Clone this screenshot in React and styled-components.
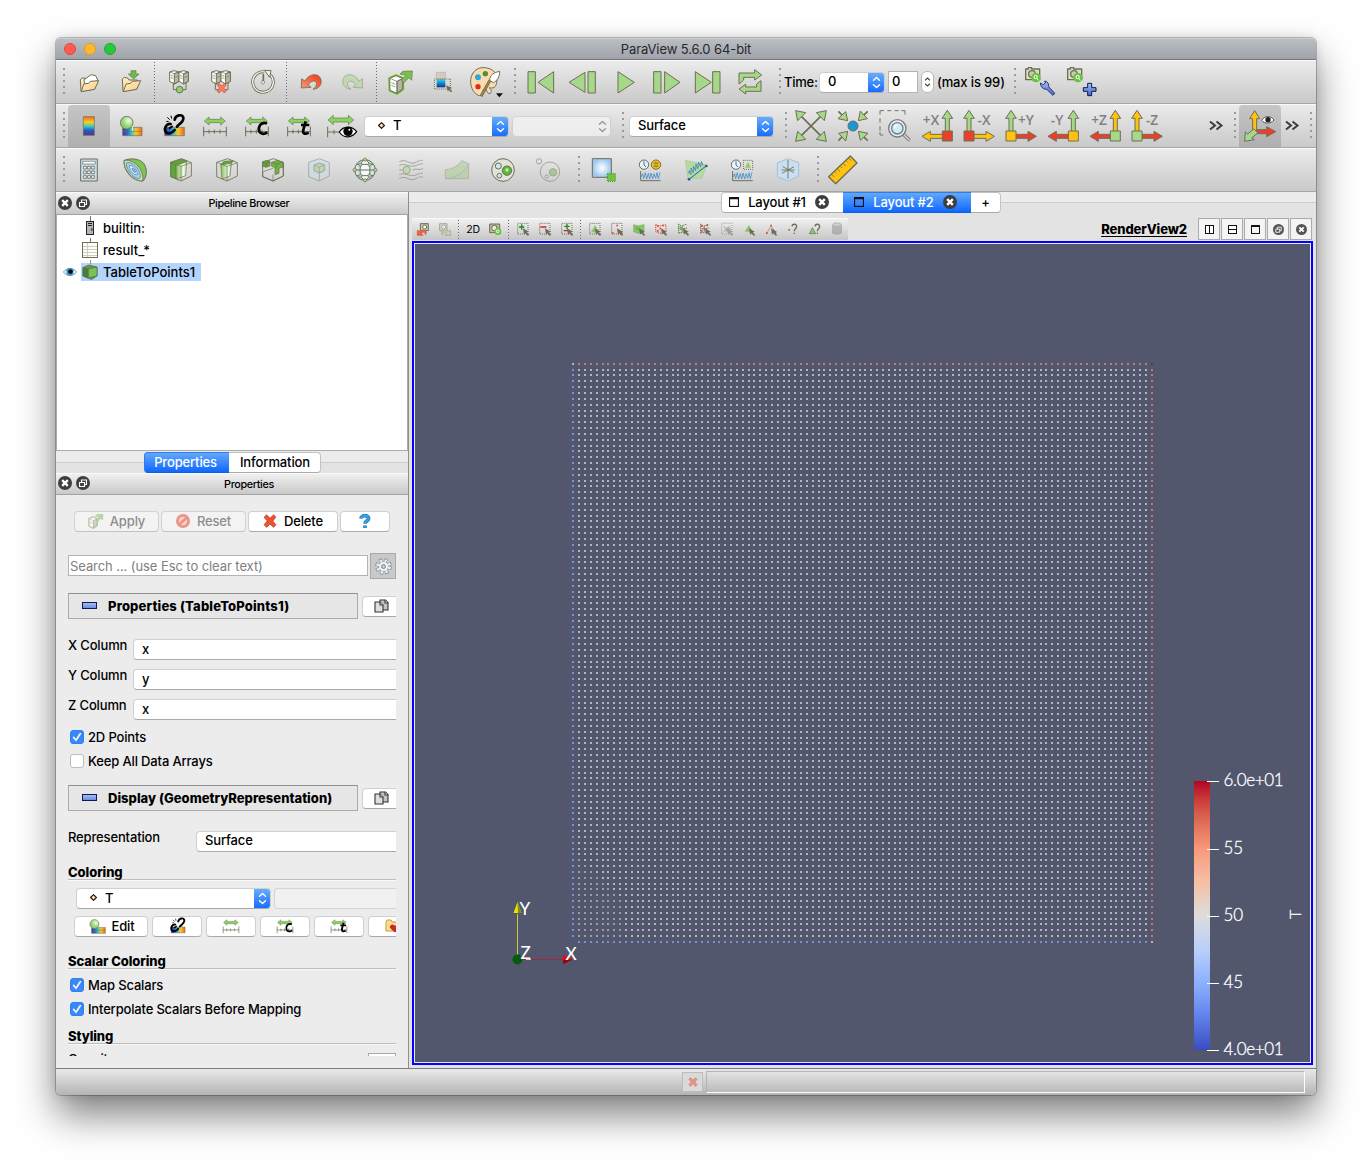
import React from "react";
import styled, { createGlobalStyle, css } from "styled-components";

const GlobalStyle = createGlobalStyle`
  * { box-sizing: border-box; }
  body {
    margin: 0;
    background: #fff;
    font-family: Inter, "Liberation Sans", sans-serif;
    font-size: 13px;
    font-weight: 500;
    letter-spacing: -0.15px;
    color: #000;
  }
  svg { display: block; flex: none; }
`;

const OUT = "#6e6e55";
const GREEN = "#a6d88a";
const YEL = "#ffc20e";
const RED = "#ea3f2c";

/* ---------- window chrome ---------- */

const Desktop = styled.div`
  height: 1169px;
  padding: 38px 56px 73px;
  overflow: hidden;
  background: #fff;
`;
const Window = styled.div`
  width: 1260px;
  height: 1057px;
  display: flex;
  flex-direction: column;
  border-radius: 5px;
  overflow: hidden;
  background: #ececec;
  box-shadow: 0 0 0 1px rgba(0, 0, 0, 0.22), 0 20px 38px rgba(0, 0, 0, 0.5), 0 0 12px rgba(0, 0, 0, 0.12);
`;
const TitleBar = styled.header`
  height: 22px;
  flex: none;
  display: grid;
  grid-template-columns: 1fr auto 1fr;
  align-items: center;
  background: linear-gradient(#babec3, #9fa4aa);
  border-top: 1px solid #cbced1;
  border-bottom: 1px solid #73777b;
  color: #26282a;
  font-weight: 400;
  letter-spacing: -0.1px;
`;
const Lights = styled.div`
  display: flex;
  gap: 8px;
  padding-left: 8px;
`;
const Light = styled.span`
  width: 12px;
  height: 12px;
  border-radius: 50%;
  background: ${(p) => p.$c};
  border: 1px solid ${(p) => p.$b};
`;
const Toolbar = styled.div`
  height: 44px;
  flex: none;
  display: flex;
  align-items: center;
  background: linear-gradient(#ebebeb, #c9c9c9);
  border-top: 1px solid #fafafa;
  border-bottom: 1px solid #a6a6a6;
`;
const Cell = styled.span`
  width: ${(p) => p.$w || 42}px;
  height: 42px;
  flex: none;
  display: flex;
  align-items: center;
  justify-content: center;
  background: ${(p) => (p.$on ? "linear-gradient(#c6c6c6, #afafaf)" : "none")};
  border-radius: 4px 4px 0 0;
  opacity: ${(p) => (p.$dim ? 0.5 : 1)};
`;
const Handle = styled.i`
  width: ${(p) => p.$w || 12}px;
  height: 42px;
  flex: none;
  padding: 7px 0 0 ${(p) => p.$l ?? 7}px;
  &::before {
    content: "";
    display: block;
    width: 2px;
    height: 26px;
    background: repeating-linear-gradient(#9a9a9a 0 2px, transparent 2px 6px);
  }
`;
const Divider = styled.i`
  width: 6px;
  flex: none;
  align-self: stretch;
  margin: 1px 0;
  padding-left: 2px;
  &::before {
    content: "";
    display: block;
    width: 1px;
    height: 100%;
    background: repeating-linear-gradient(#6c6c6c 0 1px, transparent 1px 3px);
  }
`;
const Spacer = styled.i`
  width: ${(p) => p.$w}px;
  flex: none;
`;
const Label = styled.span`
  width: ${(p) => (p.$w ? p.$w + "px" : "auto")};
  flex: none;
  padding-bottom: ${(p) => p.$pb || 0}px;
  white-space: nowrap;
  letter-spacing: ${(p) => p.$ls ?? -0.15}px;
`;

/* ---------- controls ---------- */

const boxy = css`
  height: ${(p) => p.$h || 21}px;
  flex: none;
  background: #fff;
  border: 1px solid #cfcfcf;
  border-bottom-color: #a9a9a9;
  border-radius: 4px;
`;
const SelectBox = styled.div`
  ${boxy}
  width: ${(p) => p.$w}px;
  display: flex;
  align-items: center;
  overflow: hidden;
  padding: 0 0 ${(p) => p.$pb ?? 2}px 8px;
  ${(p) => p.$off && "background: #f3f3f3; border-color: #cfcfcf; opacity: .8;"}
  ${(p) => p.$cut && "border-radius: 4px 0 0 4px; border-right: 0;"}
`;
const Arrows = styled.span`
  width: 17px;
  height: 21px;
  margin: -1px -1px -3px auto;
  flex: none;
  display: flex;
  align-items: center;
  justify-content: center;
  background: ${(p) => (p.$off ? "none" : "linear-gradient(#6bb0fa, #1469fd)")};
  color: ${(p) => (p.$off ? "#8a8a8a" : "#fff")};
`;
const UpDown = ({ off }) => (
  <Arrows $off={off}>
    <svg width="9" height="13" viewBox="0 0 9 13" fill="none" stroke="currentColor" strokeWidth="1.4" strokeLinecap="round" strokeLinejoin="round">
      <path d="M1.5 4.2L4.5 1.4L7.5 4.2M1.5 8.8L4.5 11.6L7.5 8.8" />
    </svg>
  </Arrows>
);
const Mark = styled.span`
  margin: 0 8px 0 5px;
  flex: none;
`;
const PointMark = () => (
  <Mark>
    <svg width="7" height="7" viewBox="0 0 7 7"><path d="M3.5 .7L6.4 3.5L3.5 6.3L.6 3.5Z" fill="#ffe0bd" stroke="#1d1008" strokeWidth="1.1" strokeLinejoin="round" /></svg>
  </Mark>
);
const NumberBox = styled.div`
  width: 30px;
  height: 22px;
  padding: 1px 3px;
  background: #fff;
  border: 1px solid #b4b4b4;
  margin-left: 3px;
`;
const Stepper = styled.div`
  width: 13px;
  height: 22px;
  margin-left: 3px;
  display: flex;
  align-items: center;
  justify-content: center;
  background: #fff;
  border: 1px solid #b9b9b9;
  border-radius: 6px;
  color: #444;
`;
const PushButton = styled.div`
  ${boxy}
  width: ${(p) => p.$w}px;
  display: flex;
  align-items: center;
  justify-content: center;
  gap: ${(p) => p.$g ?? 7}px;
  padding: 0 ${(p) => p.$p || 0}px 1px 0;
  ${(p) => p.$off && "background: #f3f3f3; color: #8d8d8d; border-color: #d2d2d2; border-bottom-color: #c2c2c2;"}
  ${(p) => p.$cut && "border-radius: 4px 0 0 4px; border-right: 0;"}
  & > svg { opacity: ${(p) => (p.$off ? 0.5 : 1)}; }
`;

/* ---------- body ---------- */

const Body = styled.div`
  height: 876px;
  flex: none;
  display: flex;
`;
const Dock = styled.aside`
  width: 353px;
  flex: none;
  display: flex;
  flex-direction: column;
  border-right: 1px solid #8f8f8f;
`;
const DockTitle = styled.div`
  height: ${(p) => p.$h}px;
  flex: none;
  display: grid;
  grid-template-columns: 60px 1fr 28px;
  align-items: center;
  padding-left: 2px;
  font-size: 10.8px;
  letter-spacing: -0.35px;
  text-align: center;
  background: linear-gradient(#f0f0f0, #c9c9c9);
  border-top: 1px solid #fafafa;
  border-bottom: 1px solid #a2a2a2;
`;
const DockTools = styled.div`
  display: flex;
  gap: 4px;
  margin-top: -2px;
`;
const Tree = styled.div`
  height: 236px;
  flex: none;
  padding-top: 2px;
  background: #fff;
  border: 1px solid #ababab;
  border-top: 0;
`;
const TreeRow = styled.div`
  height: 22px;
  display: flex;
  align-items: center;
`;
const EyeCol = styled.span`
  width: 24px;
  padding-left: 6px;
  flex: none;
`;
const TreeItem = styled.span`
  height: 18px;
  display: flex;
  align-items: center;
  gap: 5px;
  padding: 0 6px 0 1px;
  background: ${(p) => (p.$on ? "#b3d5fd" : "none")};
  letter-spacing: 0;
  svg { overflow: visible; }
`;
const TabStrip = styled.div`
  display: flex;
  justify-content: center;
  height: ${(p) => p.$h}px;
  flex: none;
  padding-top: ${(p) => p.$t || 0}px;
  padding-right: ${(p) => p.$r || 0}px;
  background: linear-gradient(#ececec ${(p) => p.$mid}px, #cdcdcd ${(p) => p.$mid}px ${(p) => p.$mid + 1}px, #e3e3e3 ${(p) => p.$mid + 1}px);
`;
const Tab = styled.span`
  height: 21px;
  width: ${(p) => p.$w}px;
  display: flex;
  align-items: center;
  justify-content: center;
  gap: ${(p) => p.$g || 9}px;
  padding: 0 ${(p) => p.$p || 0}px 1px ${(p) => p.$pl || 0}px;
  border: 1px solid ${(p) => (p.$on ? "#2f7bf0" : "#c2c2c2")};
  border-bottom-color: ${(p) => (p.$on ? "#0a5fe6" : "#ababab")};
  border-width: 1px ${(p) => (p.$last ? 1 : 0)}px 1px ${(p) => (p.$first ? 1 : 0)}px;
  background: ${(p) => (p.$on ? "linear-gradient(#63a8fb, #0f68fc)" : "#fff")};
  color: ${(p) => (p.$on ? "#fff" : "#000")};
  border-radius: ${(p) => (p.$first ? "4px 0 0 4px" : p.$last ? "0 4px 4px 0" : "0")};
`;
const Panel = styled.div`
  width: 328px;
  height: 561px;
  margin-left: 12px;
  padding-top: 16px;
  overflow: hidden;
`;
const Row = styled.div`
  height: ${(p) => p.$h || 21}px;
  margin-top: ${(p) => p.$t || 0}px;
  padding-left: ${(p) => p.$l || 0}px;
  display: flex;
  align-items: ${(p) => p.$a || "center"};
  gap: ${(p) => p.$g || 0}px;
  white-space: nowrap;
`;
const Search = styled.div`
  width: 300px;
  height: 21px;
  margin-bottom: 1px;
  padding: 2px 1px;
  background: #fff;
  border: 1px solid #b3b3b3;
  color: #808080;
  font-weight: 400;
  letter-spacing: -0.08px;
`;
const Gear = styled.div`
  width: 26px;
  height: 26px;
  display: flex;
  align-items: center;
  justify-content: center;
  background: #c9c9c9;
  border: 1px solid #a9a9a9;
`;
const GroupHead = styled.div`
  width: 290px;
  height: 26px;
  flex: none;
  display: flex;
  align-items: center;
  gap: 11px;
  padding-left: 13px;
  background: #e6e6e6;
  border: 1px solid #ababab;
  border-top-color: #8f8f8f;
  font-weight: 800;
  letter-spacing: ${(p) => p.$ls ?? 0.02}px;
  &::before {
    content: "";
    width: 13px;
    height: 5px;
    margin: -2px 0 0 0;
    border: 1px solid #0c1a55;
    background: linear-gradient(#a9bcf0, #6e8ddd);
  }
`;
const FieldLabel = styled.span`
  width: ${(p) => p.$w}px;
  flex: none;
  padding-bottom: 9px;
`;
const Tick = styled.span`
  width: 14px;
  height: 14px;
  margin: 0 4px 0 2px;
  flex: none;
  border-radius: 3px;
  border: 1px solid ${(p) => (p.$on ? "#2f7ff5" : "#bdbdbd")};
  background: ${(p) => (p.$on ? "#3a87f8" : "#fff")};
`;
const Section = styled.div`
  height: 16px;
  margin-top: ${(p) => p.$t}px;
  line-height: 16px;
  font-weight: 800;
  letter-spacing: -0.08px;
  border-bottom: 1px solid #bdbdbd;
  box-shadow: 0 1px #f8f8f8;
`;
const Opacity = styled.div`
  width: 28px;
  height: 20px;
  margin: 2px 0 0 auto;
  background: #fff;
  border: 1px solid #a9a9a9;
`;

/* ---------- view side ---------- */

const Views = styled.main`
  width: 907px;
  display: flex;
  flex-direction: column;
  background: #e3e3e3;
`;
const ViewTop = styled.div`
  height: 28px;
  flex: none;
  display: flex;
  align-items: flex-start;
  padding: 5px 4px 0 3px;
`;
const ViewTools = styled.div`
  width: 436px;
  height: 22px;
  display: flex;
  align-items: center;
  background: linear-gradient(#f0f0f0, #c6c6c6);
  border-top: 1px solid #fafafa;
`;
const SmallCell = styled.span`
  width: 22px;
  height: 22px;
  flex: none;
  display: flex;
  align-items: center;
  justify-content: center;
  font-size: 10.5px;
  font-weight: 400;
  opacity: ${(p) => (p.$dim ? 0.5 : 1)};
`;
const ViewName = styled.span`
  margin-left: auto;
  margin-right: 11px;
  padding-top: 3px;
  font-weight: 800;
  font-size: 13px;
  letter-spacing: -0.1px;
  text-decoration: underline;
  text-underline-offset: 2px;
`;
const ViewButtons = styled.div`
  display: flex;
  gap: 1px;
`;
const ViewButton = styled.span`
  width: 22px;
  height: 22px;
  display: flex;
  align-items: center;
  justify-content: center;
  background: #f4f4f4;
  border: 1px solid #ababab;
`;
const Frame = styled.div`
  width: 901px;
  height: 824px;
  margin-left: 3px;
  border: 2px solid #0202ff;
  background: #52576e;
  outline: 1px solid #e9e9ef;
  outline-offset: -3px;
  padding: 1px;
`;
const Status = styled.footer`
  height: 27px;
  flex: none;
  display: flex;
  padding: 3px 11px 0 626px;
  gap: 3px;
  background: linear-gradient(#e9e9e9, #b4b4b4);
  border-top: 1px solid #7c7c7c;
`;
const Abort = styled.span`
  width: 21px;
  height: 20px;
  display: flex;
  align-items: center;
  justify-content: center;
  background: #d9d9d9;
  border: 1px solid #bdbdbd;
  svg { opacity: 0.5; }
`;
const Progress = styled.span`
  width: 599px;
  height: 22px;
  margin-top: -1px;
  border: 1px solid #fdfdfd;
  border-top-color: #b4b4b4;
  border-left-color: #b4b4b4;
`;

/* ---------- icons: three drawing units per pixel, centred on (x, y) ---------- */

const Ico = ({ x = 0, y = 0, u = 126, s = 42, children }) => (
  <svg width={s} height={s} viewBox={`${x - u / 2} ${y - u / 2} ${u} ${u}`} fill="none" stroke={OUT} strokeWidth="3" strokeLinejoin="round">
    {children}
  </svg>
);

const HiddenSvg = styled.svg`
  position: absolute;
`;
const Defs = () => (
  <HiddenSvg width="0" height="0">
    <defs>
      <linearGradient id="rainbow" x1="0" y1="0" x2="0" y2="1">
        <stop offset="0" stopColor="#f26a1c" /><stop offset=".3" stopColor="#f5cf2a" /><stop offset=".52" stopColor="#3fc8c0" />
        <stop offset=".72" stopColor="#1b62c9" /><stop offset="1" stopColor="#5a2a92" />
      </linearGradient>
      <linearGradient id="deepsea" x1="0" y1="0" x2="0" y2="1">
        <stop offset="0" stopColor="#58d6d0" /><stop offset=".4" stopColor="#129ad8" /><stop offset="1" stopColor="#14308e" />
      </linearGradient>
      <linearGradient id="rainbowH">
        <stop offset="0" stopColor="#53308f" /><stop offset=".25" stopColor="#1f6fd0" /><stop offset=".45" stopColor="#3cc0c0" />
        <stop offset=".68" stopColor="#f7c82a" /><stop offset="1" stopColor="#f26a1c" />
      </linearGradient>
      <radialGradient id="ball" cx=".65" cy=".35"><stop offset="0" stopColor="#f0fbe8" /><stop offset="1" stopColor="#8fd070" /></radialGradient>
      <linearGradient id="leaf"><stop offset="0" stopColor="#7cc150" /><stop offset=".7" stopColor="#eef9e4" /><stop offset="1" stopColor="#b9e09c" /></linearGradient>
      <linearGradient id="folder" x1="0" y1="0" x2="1" y2="1"><stop offset="0" stopColor="#fff0cf" /><stop offset="1" stopColor="#ffc97c" /></linearGradient>
      <linearGradient id="redo" x1="0" y1="1" x2="1" y2="0"><stop offset="0" stopColor="#ff9a7c" /><stop offset="1" stopColor="#f03a14" /></linearGradient>
      <radialGradient id="sky"><stop offset="0" stopColor="#fff" /><stop offset="1" stopColor="#9cc8ee" /></radialGradient>
      <linearGradient id="navy" x1="0" y1="0" x2="0" y2="1"><stop offset="0" stopColor="#a7c0f5" /><stop offset="1" stopColor="#4664c8" /></linearGradient>
      <linearGradient id="coolwarm" x1="0" y1="0" x2="0" y2="1">
        <stop offset="0" stopColor="#b40426" /><stop offset=".06" stopColor="#c63536" /><stop offset=".125" stopColor="#d85f4c" /><stop offset=".25" stopColor="#f7987a" />
        <stop offset=".375" stopColor="#f5c0a4" /><stop offset=".5" stopColor="#dddcdc" /><stop offset=".625" stopColor="#b8d0f9" />
        <stop offset=".75" stopColor="#8db0fe" /><stop offset=".875" stopColor="#6282ea" /><stop offset="1" stopColor="#3b4cc0" />
      </linearGradient>
    </defs>
  </HiddenSvg>
);

const OpenFolder = () => (
  <Ico x={117} y={156}>
    <path d="M93 184L91 149L97 144L106 145L110 151L134 150L138 158L134 177Z" fill="url(#folder)" />
    <path d="M102 149L124 134L137 137L143 150L134 160L104 162Z" fill="#fff" />
    <path d="M94 185L101 162L116 160L121 154L146 152L134 178Z" fill="url(#folder)" />
  </Ico>
);
const LoadState = () => (
  <Ico x={243} y={156}>
    <path d="M219 184L217 147L223 142L233 144L237 150L262 150L264 158L260 177Z" fill="url(#folder)" />
    <path d="M220 185L228 162L242 160L247 154L272 152L260 178Z" fill="url(#folder)" />
    <path d="M243 122h15v10h9l-16 15l-16-15h8Z" fill="#66c13e" strokeWidth="2" />
  </Ico>
);
const Tower = ({ x, y }) => (
  <g transform={`translate(${x} ${y})`}>
    <path d="M0 4L14 0L28 4V32L14 40L0 32Z" fill="#fff" />
    <path d="M14 9L28 4V32L14 40Z" fill="#b9b9a8" />
    <path d="M0 4L14 9L28 4" strokeWidth="2" />
    <path d="M3 14L11 17M3 21L11 24M17 20L25 17" strokeWidth="2" />
  </g>
);
const Connect = ({ off }) => (
  <Ico x={387} y={156}>
    <Tower x={359} y={122} /><Tower x={387} y={122} />
    <path d="M370 158V179H408V158" />
    {off ? <path d="M376 165l5-5 8 8 8-8 6 5-8 9 8 9-6 6-8-8-8 8-6-6 8-9Z" fill="#ff7a5c" stroke="#c9452f" strokeWidth="2" /> : <circle cx="389" cy="179" r="10" fill="#8fd070" />}
  </Ico>
);
const ResetSession = () => (
  <Ico x={639} y={156}>
    <circle cx="639" cy="156" r="31" strokeWidth="9" strokeDasharray="170 25" transform="rotate(-42 639 156)" />
    <circle cx="639" cy="156" r="31" stroke="#f4f4ee" strokeWidth="4" strokeDasharray="170 25" transform="rotate(-42 639 156)" />
    <path d="M640 134V157" strokeWidth="5" strokeLinecap="round" /><circle cx="639" cy="157" r="5" fill="#eee" strokeWidth="2" />
    <path d="M643 121L663 122L659 142Z" fill="#f4f4ee" />
  </Ico>
);
const Undo = ({ flip }) => (
  <Ico x={783} y={156}>
    <g transform={flip ? "translate(1566 0) scale(-1 1)" : undefined}>
      <path d="M755 146L754 174L783 172L775 164C784 149 803 150 799 165C797 171 793 175 789 178C807 176 816 164 813 149C808 128 776 129 765 154Z" fill={flip ? "#a6d88a" : "url(#redo)"} strokeWidth="2.5" />
    </g>
  </Ico>
);
const ServerExport = ({ u, s }) => (
  <Ico x={1053} y={156} u={u} s={s}>
    <path d="M1019 145L1038 137L1058 145V177L1041 190L1020 181Z" stroke="#74c730" strokeWidth="9" />
    <path d="M1019 145L1038 137L1058 145V177L1041 190L1020 181Z" fill="#fff" />
    <path d="M1041 154L1058 145V177L1041 190Z" fill="#b4b4a2" />
    <path d="M1019 145L1041 154V188" strokeWidth="2" /><path d="M1024 158l12 5M1024 166l12 5" strokeWidth="2" />
    <path d="M1050 132L1059 124L1087 123L1085 151L1077 143L1061 158L1053 150L1069 136Z" fill="#74c34b" strokeWidth="2" />
  </Ico>
);
const SelectColor = () => (
  <Ico x={99} y={156}>
    <rect x="79" y="127" width="27" height="20" fill="#d9c9bb" stroke="#b5b0a8" strokeWidth="2" />
    <rect x="80" y="147" width="26" height="25" fill="url(#deepsea)" stroke="none" />
    <path d="M73 147H121V177H73Z" strokeDasharray="3 3" />
    <path d="M108 166L127 174L120 177L127 184L123 187L116 180L114 186Z" fill={OUT} stroke="none" />
  </Ico>
);
const Palette = () => (
  <Ico x={225} y={156}>
    <path d="M222 113C197 111 180 133 182 158C184 184 202 199 213 197C221 194 214 184 222 177C230 172 229 188 237 191C247 189 245 181 238 173C256 178 260 165 261 150C262 125 244 114 222 113Z" fill="#fbdcb0" />
    <circle cx="204" cy="142" r="9" fill="#2ea8e0" stroke="none" /><circle cx="226" cy="131" r="8" fill="#4f8f2c" stroke="none" />
    <circle cx="204" cy="170" r="8" fill="#e02d1d" stroke="none" />
    <path d="M213 199L240 151" stroke={OUT} strokeWidth="9" /><path d="M214 197L240 151" stroke="#a68447" strokeWidth="4" />
    <path d="M239 151C239 135 252 127 269 124C270 140 260 154 250 158Z" fill="#fff" />
    <path d="M258 190H279L268 202Z" fill="#111" stroke="none" />
  </Ico>
);

const Play = ({ kind }) => (
  <Ico x={{ first: 393, prev: 519, play: 645, next: 771, last: 897, loop: 1023 }[kind]} y={156}>
    <g fill={GREEN}>
      {kind === "first" && <><path d="M354 125H376V189H354Z" /><path d="M431 125V189L384 157Z" /></>}
      {kind === "prev" && <><path d="M534 125H556V189H534Z" /><path d="M525 127V187L477 157Z" /></>}
      {kind === "play" && <path d="M624 125V189L673 157Z" />}
      {kind === "next" && <><path d="M731 125H753V189H731Z" /><path d="M764 125V189L810 157Z" /></>}
      {kind === "last" && <><path d="M908 125H930V189H908Z" /><path d="M856 125V189L904 157Z" /></>}
      {kind === "loop" && <><path d="M987 162V129H1034V119L1055 135L1034 150V142H1001V150Z" /><path d="M1053 152V184H1007V192L987 177L1007 163V171H1040V162Z" /></>}
    </g>
  </Ico>
);
const Camera = ({ plus }) => (
  <Ico x={813} y={156}>
    <path d="M767 117H775V113H785V117H809V149H767Z" fill="#dcdccb" strokeWidth="4" />
    <circle cx="786" cy="132" r="10" fill="#c9c9b8" strokeWidth="4" />
    <circle cx="798" cy="143" r="14" fill="#67c43b" stroke="none" /><circle cx="797" cy="141" r="5" stroke="#fff" /><path d="M800 145L805 151" stroke="#fff" />
    {plus ? (
      <path d="M827 160h12v13h13v11h-13v13h-12v-13h-13v-11h13Z" fill="url(#navy)" stroke="#0c1a55" />
    ) : (
      <path d="M811 159L820 164L826 159L824 153C832 154 838 162 836 170L854 190L849 196L830 178C820 179 811 170 811 159Z" fill="url(#navy)" stroke="#0c1a55" strokeWidth="2.5" />
    )}
  </Ico>
);

const ColorBar = () => (
  <Ico x={117} y={288}><rect x="100" y="260" width="33" height="56" fill="url(#rainbow)" strokeWidth="2" /></Ico>
);
const EditMap = ({ u, s }) => (
  <Ico x={243} y={288} u={u} s={s}>
    <rect x="218" y="292" width="58" height="25" fill="url(#rainbowH)" strokeWidth="2" />
    <path d="M218 304H276" strokeWidth="1.5" />
    <circle cx="230" cy="278" r="19" fill="url(#ball)" strokeWidth="2.5" />
    {u ? null : <path d="M247 288v15" stroke="#eee" />}
  </Ico>
);
const Rescale = ({ kind, u, s }) => (
  <Ico x={kind === "eye" ? 498 : 495} y={288} u={u} s={s}>
    <path d={kind === "eye" ? "M456 270L472 256V264H517V256L533 270L517 284V276H472V284Z" : "M463 273L477 261V268H512V261L526 273L512 285V278H477V285Z"} fill="#85d75c" strokeWidth="2" />
    <path d={kind === "eye" ? "M455 290V322M455 306H500M474 300v13" : "M461 290V319M529 290V319M461 305H529M477 299v12M493 299v12M510 299v12"} />
    {kind === "c" && <path d="M522 281C503 272 494 293 499 305C504 314 515 313 523 307" stroke="#000" strokeWidth="8" transform="translate(3 0)" />}
    {kind === "t" && <path d="M513 274L505 303C505 312 513 313 522 308M499 285H524" stroke="#000" strokeWidth="8" transform="translate(2 0)" />}
    {kind === "eye" && <><path d="M490 306C502 287 528 286 542 305C528 325 502 326 490 306Z" fill="#fff" stroke="#000" strokeWidth="3.5" /><circle cx="516" cy="304" r="14" fill="#000" stroke="none" /><circle cx="520" cy="299" r="3" fill="#fff" stroke="none" /></>}
  </Ico>
);
const Chain = ({ u, s }) => (
  <Ico x={369} y={288} u={u} s={s}>
    <rect x="344" y="292" width="59" height="25" fill="url(#rainbowH)" strokeWidth="2" />
    <path d="M362 282C349 280 342 294 346 304C352 315 366 310 374 300" stroke="#000" strokeWidth="8" strokeLinecap="round" />
    <path d="M374 269C377 255 396 251 400 263C402 276 388 281 381 290" stroke="#000" strokeWidth="8" strokeLinecap="round" />
    <path d="M357 296L368 288" stroke="#000" strokeWidth="6" />
    <path d="M352 262L359 269M363 257L365 266M349 274L356 275" stroke="#000" strokeWidth="3" />
  </Ico>
);

const ResetCamera = () => (
  <Ico x={123} y={288}>
    <path d="M85 250L161 326M161 250L85 326" strokeWidth="5" />
    {[0, 90, 180, 270].map((r) => <path key={r} d="M77 242L107 248L83 272Z" fill={GREEN} transform={`rotate(${r} 123 288)`} />)}
  </Ico>
);
const ZoomToData = () => (
  <Ico x={249} y={288}>
    {[0, 90, 180, 270].map((r) => (
      <g key={r} transform={`rotate(${r} 249 288)`}><path d="M205 244L218 257" strokeWidth="5" /><path d="M233 272L204 266L227 245Z" fill={GREEN} /></g>
    ))}
    <circle cx="249" cy="288" r="15" fill="#1b96d8" />
  </Ico>
);
const ZoomBox = () => (
  <Ico x={375} y={288}>
    <path d="M330 254V242H342M352 242H364M374 242H386M394 242H405V254M330 264V278M330 288V302M330 306V315H340" stroke="#74746a" />
    <path d="M400 313L419 331" strokeWidth="10" stroke="#7a7a7a" /><path d="M400 313L418 330" strokeWidth="4" stroke="#ddd" />
    <circle cx="382" cy="295" r="26" fill="#ececec" stroke="#7a7a7a" strokeWidth="4" /><circle cx="382" cy="295" r="17" fill="#cfeafa" stroke="#6d7f8a" strokeWidth="4" />
    <path d="M373 295C373 289 377 285 383 285" stroke="#fff" strokeWidth="4" />
  </Ico>
);
const AxisView = ({ label, left, up, side, sq }) => {
  const c = left ? 31 : -30;
  return (
    <Ico>
      <path d={`M${c} -47L${c + 16} -23H${c + 6}V20H${c - 6}V-23H${c - 16}Z`} fill={up} />
      <path d={left ? "M-45 31L-20 16V25H20V37H-20V46Z" : "M46 31L21 16V25H-20V37H21V46Z"} fill={side} />
      <rect x={c - 15} y="15" width="30" height="30" fill={sq} />
      <text x={left ? -18 : 15} y="-2" textAnchor="middle" fontSize="41" letterSpacing="0" fontFamily="Open Sans, sans-serif" fontWeight="600" fill="#808080" stroke="none">{label}</text>
    </Ico>
  );
};
const Orientation = () => (
  <Ico x={600} y={288}>
    <path d="M584 242L599 266H590V305H578V266H569Z" fill={YEL} />
    <path d="M590 299H620V290L647 305L620 320V311H590Z" fill={RED} />
    <path d="M581 297L594 308L575 324L583 329L554 334L556 306L563 312Z" fill={GREEN} />
    <path d="M605 271C613 257 632 256 642 270C632 282 613 282 605 271Z" fill="#fff" stroke="#555" /><circle cx="624" cy="269" r="8" fill="#222" stroke="none" />
  </Ico>
);
const More = () => (
  <svg width="16" height="16" viewBox="0 0 16 16" fill="none" stroke="#3d3d3d" strokeWidth="2"><path d="M2 3.500L7 7.500L2 11.500M8.500 3.500L13.500 7.500L8.500 11.500" /></svg>
);

const Calculator = () => (
  <Ico x={117} y={420}>
    <rect x="92" y="387" width="50" height="66" fill="#c3dcf2" /><rect x="98" y="394" width="38" height="8" fill="#fff" strokeWidth="2" />
    {[413, 427, 441].map((y) => [105, 117, 129].map((x) => <rect key={x + "-" + y} x={x - 4} y={y - 4} width="8" height="8" fill="#fff" strokeWidth="2.5" />))}
  </Ico>
);
const Contour = () => (
  <Ico x={255} y={420}>
    <path d="M222 392C234 384 268 384 281 400C292 416 292 440 279 453C250 455 221 426 222 392Z" fill="#7cc455" />
    <path d="M222 392C238 386 264 400 274 424C280 438 280 450 276 453C250 453 222 424 222 392Z" fill="#c3e5ab" strokeWidth="2.5" />
    <path d="M229 399C242 393 262 408 269 428C273 440 271 446 266 446C249 445 229 422 229 399Z" fill="#a9cdec" stroke="#3c74ae" strokeWidth="2" />
    <path d="M238 407C248 403 260 418 263 433C254 438 239 424 238 407Z" fill="#e2effa" stroke="#3c74ae" strokeWidth="2" />
    <path d="M246 414C252 414 256 422 257 427C252 428 247 422 246 414Z" fill="#8fbde6" stroke="#3c74ae" strokeWidth="2" />
  </Ico>
);
const Cube = ({ kind }) => (
  <Ico x={393} y={420}>
    <path d="M362 397L395 386L424 398V438L393 453L362 440Z" strokeWidth="2.5" fill={kind === "threshold" ? "#c4def2" : "none"} />
    {kind === "clip" && <><path d="M362 397L392 387L412 393L378 405V446L362 440Z" fill="#5fa637" strokeWidth="2" /><path d="M378 405L410 396L407 437L379 447Z" fill="url(#leaf)" strokeWidth="2" /></>}
    {kind === "slice" && <><path d="M374 404L384 394L412 392L404 402Z" fill="#5fa637" strokeWidth="2" /><path d="M374 404L406 400L402 438L378 447Z" fill="url(#leaf)" strokeWidth="2" /></>}
    {kind === "extract" && (
      <>
        <path d="M362 399V412M362 425V440L393 453L424 438V398" strokeWidth="2.5" />
        <path d="M362 395l12-4 10 3v14l-12 4-10-4Z" fill="#5ea832" strokeWidth="2" /><path d="M362 395l10 4v13M372 399l12-5" strokeWidth="2" />
        <path d="M388 397L406 391L423 396V411L411 415V430L399 434V413L389 409Z" fill="#6cb53f" strokeWidth="2" /><path d="M388 397L403 402L423 396M403 402V414" strokeWidth="2" />
      </>
    )}
    {kind === "threshold" && <path d="M378 405L394 399L410 405V422L394 429L378 422Z" fill="#9fd080" />}
    {kind === "threshold" ? <path d="M378 405L394 411L410 405M394 411V453" strokeWidth="2.5" /> : kind === "extract" ? <path d="M393 434V453M364 425L393 415" strokeWidth="2" /> : <path d="M362 397L393 409L424 398M393 409V453" strokeWidth="2" />}
  </Ico>
);
const Glyph = () => (
  <Ico x={945} y={420}>
    <circle cx="945" cy="420" r="31" fill="#cfe3f4" /><ellipse cx="945" cy="420" rx="15" ry="31" fill="#f3f8fc" />
    <path d="M920 403H970M914 420H976M920 437H970" />
    {[[945, 389], [945, 451], [914, 420], [976, 420], [931, 404], [959, 404], [931, 437], [959, 437]].map(([x, y]) => <circle key={x + "," + y} cx={x} cy={y} r="5" fill="#a5dc83" strokeWidth="2" />)}
  </Ico>
);
const Stream = () => (
  <Ico>
    <path d="M-35 -25C-15 -36 -5 -14 12 -22S30 -30 36 -28M-35 -14C-18 -22 -5 -8 10 -12S28 -20 36 -18M-35 14C-20 6 -5 20 10 16S28 8 36 10M-35 26C-18 14 -5 34 10 28S28 18 36 22M5 0C16 -6 26 2 36 -4" />
    <circle cx="-13" cy="0" r="11" fill="#a5dc83" /><path d="M-35 0H-24" />
  </Ico>
);
const Warp = () => (
  <Ico x={141} y={420}>
    <path d="M106 419C128 419 146 405 155 392L176 401V446H106Z" fill="#a5cd8d" stroke="#8a9a78" /><path d="M106 446C140 445 164 428 176 401" stroke="#8a9a78" />
  </Ico>
);
const Group = ({ small }) => (
  <Ico x={279} y={420}>
    {small ? (
      <><circle cx="282" cy="425" r="29" /><circle cx="249" cy="394" r="8" fill="#cfe3f4" /><circle cx="291" cy="427" r="11" fill="#6cc04a" /><circle cx="272" cy="440" r="5" fill="#cfe3f4" /></>
    ) : (
      <><circle cx="279" cy="420" r="34" fill="#dfe3da" /><circle cx="265" cy="408" r="9" fill="#cfe3f4" /><circle cx="291" cy="422" r="14" fill="#5cb835" /><circle cx="291" cy="420" r="5" fill="#c9f0b0" stroke="none" /><circle cx="268" cy="437" r="7" fill="#cfe3f4" /></>
    )}
  </Ico>
);
const SubView = () => (
  <Ico x={582} y={420}>
    <rect x="547" y="386" width="57" height="56" fill="url(#sky)" /><path d="M592 431h24v23h-24z" fill="#6cc53a" stroke="#3f8e1e" strokeDasharray="3 3" />
  </Ico>
);
const Wave = () => <><path d="M692 423V452H752" /><path d="M693 441L698 431L701 446L706 428L710 447L715 430L719 447L723 429L728 447L732 431L737 445L741 428L745 446L750 427" stroke="#3d8fd0" strokeWidth="2.5" /></>;
const PlotTime = ({ sel }) => (
  <Ico x={720} y={420}>
    <Wave /><circle cx="702" cy="404" r="14" fill="#e9f2fa" /><path d="M702 394V405L708 411" stroke="#3d6fb0" />
    {sel ? <><path d="M724 391H752V418H724Z" strokeDasharray="3 3" /><path d="M738 395L747 413H729Z" fill="#8fce68" stroke="none" /></> : <><circle cx="738" cy="404" r="14" fill={YEL} /><path d="M730 399H746M730 409H746M735 396V412M741 396V412" strokeWidth="2" /></>}
  </Ico>
);
const PlotLine = () => (
  <Ico x={858} y={420}>
    <path d="M826 391L890 405L876 444L834 446Z" fill="#b5dba0" stroke="#a9c496" strokeWidth="2" />
    <path d="M837 448L888 408" stroke="#1a5ea8" /><circle cx="837" cy="448" r="4" fill="#1a5ea8" stroke="none" /><circle cx="889" cy="408" r="4" fill="#1a5ea8" stroke="none" />
    <path d="M836 431L838 422L843 434L843 414L850 428L850 408L857 422L858 402L864 416L865 396L872 411L874 394L879 406" stroke="#3d7fc0" strokeWidth="2.5" />
  </Ico>
);
const Probe = () => (
  <Ico x={54} y={420}>
    <path d="M22 399L54 386L86 398V438L54 453L22 440Z" fill="#c9dff2" stroke="#a9bfd0" /><path d="M54 390V446M38 410L72 428M36 430L72 410M34 420H74" strokeWidth="2.5" />
  </Ico>
);
const Ruler = () => (
  <Ico x={219} y={420}>
    <path d="M176 440L241 378L261 399L197 461Z" fill={YEL} strokeWidth="4" />
    <path d="M185 433l8 8M194 425l5 5M202 417l8 8M211 409l5 5M219 400l8 8M228 392l5 5M236 384l8 8" strokeWidth="2.5" />
  </Ico>
);

const CloseDot = ({ s = 14, c = "#3e3e3e" }) => (
  <svg width={s} height={s} viewBox="0 0 14 14"><circle cx="7" cy="7" r="7" fill={c} /><path d="M4.2 4.2L9.8 9.8M9.8 4.2L4.2 9.8" stroke="#fff" strokeWidth="2.4" /></svg>
);
const FloatDot = ({ s = 14, c = "#3e3e3e" }) => (
  <svg width={s} height={s} viewBox="0 0 14 14"><circle cx="7" cy="7" r="7" fill={c} /><path d="M3.500 6.500h5v4h-5zM5.500 6.500V4h5v4.500h-2" fill="none" stroke="#fff" strokeWidth="1.1" /></svg>
);
const WinMark = ({ w = 11, kind, c = "#111" }) => (
  <svg width={w} height={w} viewBox="0 0 9 9" fill="none" stroke={c} strokeWidth="1"><rect x=".5" y=".5" width="8" height="8" fill={kind ? "#fff" : "none"} />
    {kind === "v" ? <path d="M4.500 0V9" /> : kind === "h" ? <path d="M0 4.500H9" /> : <path d="M0 1H9" strokeWidth="2" />}</svg>
);
const Cross = ({ s = 14 }) => (
  <svg width={s} height={s} viewBox="0 0 13 13"><path d="M1 3L3.400 .8L6.500 4L9.800 .8L12 3L9 6.500L12 10L9.800 12.400L6.500 9.200L3.400 12.400L1 10L4 6.500Z" fill="#f3502c" stroke="#b8452c" strokeWidth=".8" /></svg>
);
const NoEntry = () => (
  <svg width="14" height="14" viewBox="0 0 14 14"><circle cx="7" cy="7" r="5.600" fill="#ffb8a4" stroke="#e5391b" strokeWidth="2.800" /><path d="M3 10.500L11 3.500" stroke="#e5391b" strokeWidth="2.800" /></svg>
);
const Help = () => (
  <svg width="12" height="15" viewBox="0 0 12 15" fill="none"><path d="M2 4.500C2 .8 10 .8 9.600 4.500C9.400 7 6.200 7 6 9.600M6 11.500V14" stroke="#2a6f9e" strokeWidth="3.600" /><path d="M2 4.500C2 .8 10 .8 9.600 4.500C9.400 7 6.200 7 6 9.600M6 11.800V13.800" stroke="#2fa4ec" strokeWidth="2.400" /></svg>
);
const GearMark = () => (
  <svg width="17" height="17" viewBox="-8.5 -8.5 17 17">
    <circle r="6" fill="none" stroke="#7d8894" strokeWidth="4.600" strokeDasharray="2.9 1.81" />
    <circle r="5" fill="#eef3f7" stroke="#7d8894" strokeWidth=".8" />
    <circle r="5.800" fill="none" stroke="#eef3f7" strokeWidth="3.400" strokeDasharray="1.900 2.655" strokeDashoffset="-.45" />
    <circle r="2" fill="#c9c9c9" stroke="#7d8894" />
  </svg>
);
const CopyMark = () => (
  <svg width="15" height="14" viewBox="0 0 15 14" fill="#ececec" stroke="#333" strokeWidth="1.1"><path d="M6 1H11.500L14 3.500V11H6Z" fill="#c4c4c4" /><path d="M11 1V4H14" /><path d="M1 3H6L9 6V13H1Z" fill="#dedede" /><path d="M6 3V6H9" /></svg>
);
const HeartFolder = () => (
  <svg width="16" height="14" viewBox="0 0 16 14"><path d="M1 3L2 1H6L7 3H15V12H1Z" fill="#fbe08a" stroke="#c79a3a" /><path d="M10 13L5.500 9C4.500 6 8 5 10 7.500C12 5 15.500 6 14.500 9Z" fill="#d8232a" stroke="#8c1414" strokeWidth=".7" /></svg>
);
const Server = () => (
  <svg width="16" height="16" viewBox="0 0 16 16"><path d="M8.500 -4V1" stroke="#777" /><rect x="4.500" y="1.500" width="7" height="13" fill="#b5b5b5" stroke="#222" /><path d="M6 3.500H10M6 5.500H10" stroke="#222" /><path d="M9 8h1.500v3H9z" fill="#555" /></svg>
);
const Sheet = () => (
  <svg width="16" height="16" viewBox="0 0 16 16"><path d="M8.500 -4V0" stroke="#777" /><rect x=".5" y=".5" width="15" height="15" fill="#fdfdf6" stroke={OUT} /><path d="M1 4.500H15M1 7.500H15M1 10.500H15M1 13.500H15M5.500 1V15" stroke="#cdcdc0" /></svg>
);
const GreenCube = () => (
  <svg width="16" height="16" viewBox="0 0 16 16" stroke="#5c7048" strokeWidth=".8"><path d="M8.500 -4V0" stroke="#777" /><path d="M1 3.500L7 1L15 3V12L9.500 15.500L1 12Z" fill="#5d9c45" /><path d="M6 5L15 3V12L6 14Z" fill="#79c25a" /><path d="M1 3.500L6 5V14L1 12Z" fill="#48803a" /></svg>
);
const Eye = () => (
  <svg width="14" height="10" viewBox="0 0 14 10"><path d="M.5 5C3.500 .5 10.500 .5 13.500 5C10.500 9.500 3.500 9.500 .5 5Z" fill="#fff" stroke="#777" strokeWidth=".9" /><circle cx="7" cy="4.800" r="3.700" fill="#2395d8" /><circle cx="7.500" cy="4.600" r="2.200" fill="#000" /></svg>
);

/* small selection tools, one cell is 66 units */
const Sm = ({ children }) => (
  <svg width="22" height="22" viewBox="-33 -30 66 66" fill="none" stroke={OUT} strokeWidth="3">{children}</svg>
);
const Arrow = () => <path d="M0 -2L18 9L11 10L19 18L14 20L7 13L3 17Z" fill="#6a6a55" stroke="none" />;
const Dash = () => <path d="M-16 -17H15V15H-16Z" strokeDasharray="3 3" />;
const RedDots = () => <g fill="#f0422a" stroke="none"><path d="M-2 -13h5v5h-5zM-15 10h5v5h-5zM11 8h5v5h-5z" /></g>;
const Surf = ({ red, full }) => (
  <>
    <path d={full ? "M-16 -13L-4 -9L15 -13V10L-4 13L-16 8Z" : "M-15 -15L-4 -9L12 -15M-15 -3L-2 1L14 -4M-13 12L2 10M-13 -15V12M-2 -8V10"} fill={full && !red ? "#86c765" : "none"} strokeDasharray={full ? (red ? "4 3" : "none") : "4 2"} strokeWidth={full && !red ? 2 : 3} stroke={red && full ? "#f0422a" : full ? "#7aa860" : OUT} />
    {red ? <path d="M-12 -11h5v5h-5zM-5 -4h5v5h-5zM4 -13h5v5h-5zM-12 3h5v5h-5z" fill="#f0422a" stroke="none" /> : <path d="M-10 -9L2 -3V7L-10 2Z" fill="#6fb551" stroke="none" />}
    <Arrow />
  </>
);

const dots = (() => {
  const sets = { gray: "", dim: "", blue: "", red: "", deep: "", navy: "" };
  for (let i = 0; i < 100; i++) {
    for (let j = 0; j < 100; j++) {
      const x = Math.floor(572.85 + 5.84 * i);
      const y = Math.floor(363.3 + 5.84 * j);
      let k = "gray";
      if (i < 9 && j > 84 && i + (99 - j) < 16) k = "dim";
      if (i === 0) k = j === 0 ? "gray" : j === 99 ? "navy" : "blue";
      else if (i === 99) k = j === 99 ? "gray" : j === 0 ? "deep" : "red";
      else if (j === 0) k = "red";
      else if (j === 99) k = "blue";
      sets[k] += `M${x} ${y}h2v2h-2z`;
    }
  }
  return sets;
})();

const Scene = () => (
  <svg width="895" height="818" viewBox="415 244 895 818">
    <g shapeRendering="crispEdges">
      <path d={dots.gray} fill="#b4b6bb" />
      <path d={dots.dim} fill="#9a9ca8" />
      <path d={dots.blue} fill="#7991d2" />
      <path d={dots.red} fill="#c67a6c" />
      <path d={dots.deep} fill="#a01c34" />
      <path d={dots.navy} fill="#3b4cc0" />
      <rect x="1194" y="781" width="16" height="269" fill="url(#coolwarm)" />
      <path d="M1207 781.500h12M1207 849.500h12M1207 916.500h12M1207 983.500h12M1207 1050.500h12" stroke="#fff" />
    </g>
    <g fill="#fff" fontFamily="Lato, sans-serif" fontSize="17" fontWeight="300" stroke="#fff" strokeWidth=".3">
      <text x="1223.500" y="785.500" textLength="60">6.0e+01</text>
      <text x="1223.500" y="853.500">55</text>
      <text x="1223.500" y="920.500">50</text>
      <text x="1223.500" y="987.500">45</text>
      <text x="1223.500" y="1054.500" textLength="60">4.0e+01</text>
      <text transform="translate(1301 914.500) rotate(-90)" textAnchor="middle" fontSize="16">T</text>
    </g>
    <path d="M517.500 914V958" stroke="#c9c93a" />
    <path d="M513.500 913L517.500 902L521.500 913Z" fill="#e6e600" /><path d="M517.500 902L521.500 913H518Z" fill="#8a8a10" />
    <path d="M522 959.500H564" stroke="#a0283c" />
    <path d="M526 959.500H531" stroke="#e8c8cc" />
    <path d="M563 955L573 959.500L563 964Z" fill="#f00808" /><path d="M563 960L573 959.500L563 964Z" fill="#8b0a0a" />
    <circle cx="517.500" cy="959.500" r="5" fill="#06590d" />
    <g fill="#fff" fontFamily="Lato, sans-serif" fontSize="17">
      <text x="519.500" y="914.500">Y</text><text x="520.500" y="959">Z</text><text x="565.500" y="960">X</text>
    </g>
  </svg>
);

/* ---------- composition ---------- */

const Check = ({ on, children, ls }) => (
  <Row $h={24}>
    <Tick $on={on}>
      {on && <svg width="12" height="12" viewBox="0 0 12 12" fill="none" stroke="#fff" strokeWidth="1.700" strokeLinecap="round"><path d="M2.700 6.500L5 9.200L9.300 2.800" /></svg>}
    </Tick>
    <Label $ls={ls}>{children}</Label>
  </Row>
);
const TitleDots = () => <DockTools><CloseDot /><FloatDot /></DockTools>;

const MainToolbar = () => (
  <Toolbar>
    <Handle />
    <Cell><OpenFolder /></Cell><Cell><LoadState /></Cell>
    <Divider />
    <Cell><Connect /></Cell><Cell><Connect off /></Cell><Cell><ResetSession /></Cell>
    <Divider />
    <Cell><Undo /></Cell><Cell $dim><Undo flip /></Cell>
    <Divider />
    <Cell><ServerExport /></Cell><Cell><SelectColor /></Cell><Cell><Palette /></Cell>
    <Handle $w={14} $l={8} />
    {["first", "prev", "play", "next", "last", "loop"].map((k) => <Cell key={k}><Play kind={k} /></Cell>)}
    <Handle $w={12} $l={7} />
    <Label $w={35} $ls={-0.25} $pb={1}>Time:</Label>
    <SelectBox $w={66}>0<UpDown /></SelectBox>
    <NumberBox>0</NumberBox>
    <Stepper><svg width="7" height="12" viewBox="0 0 9 13" fill="none" stroke="currentColor" strokeWidth="1.500"><path d="M1.500 4.200L4.500 1.400L7.500 4.200M1.500 8.800L4.500 11.600L7.500 8.800" /></svg></Stepper>
    <Spacer $w={3} />
    <Label $w={71} $ls={-0.15} $pb={1}>(max is 99)</Label>
    <Handle $w={12} $l={6} />
    <Cell><Camera /></Cell><Cell><Camera plus /></Cell>
  </Toolbar>
);

const ColorToolbar = () => (
  <Toolbar>
    <Handle />
    <Cell $on><ColorBar /></Cell><Cell><EditMap /></Cell><Cell><Chain /></Cell>
    <Cell><Rescale /></Cell><Cell><Rescale kind="c" /></Cell><Cell><Rescale kind="t" /></Cell><Cell $w={43}><Rescale kind="eye" /></Cell>
    <Spacer $w={1} />
    <SelectBox $w={145}><PointMark />T<UpDown /></SelectBox>
    <Spacer $w={3} />
    <SelectBox $w={99} $off><UpDown off /></SelectBox>
    <Handle $w={18} $l={11} />
    <SelectBox $w={145}><Label $ls={-0.15}>Surface</Label><UpDown /></SelectBox>
    <Handle $w={16} $l={11} />
    <Cell><ResetCamera /></Cell><Cell><ZoomToData /></Cell><Cell><ZoomBox /></Cell>
    <Cell><AxisView label="+X" left up={GREEN} side={YEL} sq={RED} /></Cell>
    <Cell><AxisView label="-X" up={GREEN} side={YEL} sq={RED} /></Cell>
    <Cell><AxisView label="+Y" up={GREEN} side={RED} sq={YEL} /></Cell>
    <Cell><AxisView label="-Y" left up={GREEN} side={RED} sq={YEL} /></Cell>
    <Cell><AxisView label="+Z" left up={YEL} side={RED} sq={GREEN} /></Cell>
    <Cell><AxisView label="-Z" up={YEL} side={RED} sq={GREEN} /></Cell>
    <Spacer $w={40} />
    <More />
    <Handle $w={15} $l={10} />
    <Cell $on><Orientation /></Cell>
    <Spacer $w={3} />
    <More />
    <Handle $w={14} $l={10} />
  </Toolbar>
);

const FilterToolbar = () => (
  <Toolbar>
    <Handle $w={10} />
    <Cell $w={46}><Calculator /></Cell><Cell $w={46}><Contour /></Cell><Cell $w={46}><Cube kind="clip" /></Cell>
    <Cell $w={46}><Cube kind="slice" /></Cell><Cell $w={46}><Cube kind="extract" /></Cell><Cell $w={46} $dim><Cube kind="threshold" /></Cell>
    <Cell $w={46}><Glyph /></Cell><Cell $w={46} $dim><Stream /></Cell><Cell $w={46} $dim><Warp /></Cell>
    <Cell $w={46}><Group /></Cell><Cell $w={46} $dim><Group small /></Cell>
    <Handle $w={9} $l={6} />
    <Cell $w={46}><SubView /></Cell><Cell $w={46}><PlotTime /></Cell><Cell $w={46}><PlotLine /></Cell>
    <Cell $w={46}><PlotTime sel /></Cell><Cell $w={46}><Probe /></Cell>
    <Handle $w={9} $l={6} />
    <Cell $w={46}><Ruler /></Cell>
  </Toolbar>
);

const PipelineDock = () => (
  <>
    <DockTitle $h={23}><TitleDots />Pipeline Browser</DockTitle>
    <Tree>
      <TreeRow><EyeCol /><TreeItem><Server /><span>builtin:</span></TreeItem></TreeRow>
      <TreeRow><EyeCol /><TreeItem><Sheet /><span>result_*</span></TreeItem></TreeRow>
      <TreeRow><EyeCol><Eye /></EyeCol><TreeItem $on><GreenCube /><span>TableToPoints1</span></TreeItem></TreeRow>
    </Tree>
  </>
);

const PropertiesDock = () => (
  <>
    <TabStrip $h={22} $t={1} $mid={11}>
      <Tab $on $first $w={85} $p={2}>Properties</Tab><Tab $last $w={92} $pl={2}><Label $ls={-0.1}>Information</Label></Tab>
    </TabStrip>
    <DockTitle $h={22}><TitleDots />Properties</DockTitle>
    <Panel>
      <Row $l={6} $g={2}>
        <PushButton $w={85} $off $g={6}><ServerExport u={78} s={16} />Apply</PushButton>
        <PushButton $w={85} $off><NoEntry />Reset</PushButton>
        <PushButton $w={90}><Cross />Delete</PushButton>
        <PushButton $w={50}><Help /></PushButton>
      </Row>
      <Row $h={26} $t={21} $g={2}><Search>Search ... (use Esc to clear text)</Search><Gear><GearMark /></Gear></Row>
      <Row $h={26} $t={14} $g={4}><GroupHead $ls={0.16}>Properties (TableToPoints1)</GroupHead><PushButton $w={38} $cut><CopyMark /></PushButton></Row>
      {[["X", "x"], ["Y", "y"], ["Z", "x"]].map(([k, v], i) => (
        <Row key={k} $t={i ? 9 : 20}><FieldLabel $w={65}>{k} Column</FieldLabel><SelectBox $w={270} $cut $pb={2}>{v}</SelectBox></Row>
      ))}
      <Row $h={5} />
      <Check on>2D Points</Check>
      <Check>Keep All Data Arrays</Check>
      <Row $h={26} $t={12} $g={4}><GroupHead>Display (GeometryRepresentation)</GroupHead><PushButton $w={38} $cut><CopyMark /></PushButton></Row>
      <Row $t={20}><FieldLabel $w={128}>Representation</FieldLabel><SelectBox $w={210} $cut $pb={3}>Surface</SelectBox></Row>
      <Section $t={12}>Coloring</Section>
      <Row $t={8} $l={8} $g={3}><SelectBox $w={195}><PointMark />T<UpDown /></SelectBox><SelectBox $w={140} $off $cut /></Row>
      <Row $t={7} $l={6} $g={4}>
        <PushButton $w={74} $g={5}><EditMap u={80} s={19} />Edit</PushButton>
        <PushButton $w={50}><Chain u={76} s={18} /></PushButton>
        <PushButton $w={50}><Rescale u={78} s={18} /></PushButton>
        <PushButton $w={50}><Rescale kind="c" u={78} s={18} /></PushButton>
        <PushButton $w={50}><Rescale kind="t" u={78} s={18} /></PushButton>
        <PushButton $w={50}><HeartFolder /></PushButton>
      </Row>
      <Section $t={16}>Scalar Coloring</Section>
      <Row $h={4} />
      <Check on>Map Scalars</Check>
      <Check on ls={-0.17}>Interpolate Scalars Before Mapping</Check>
      <Section $t={7}>Styling</Section>
      <Row $h={20} $t={7} $a="flex-start">Opacity<Opacity /></Row>
    </Panel>
  </>
);

const ViewArea = () => (
  <Views>
    <TabStrip $h={21} $mid={10} $r={3}>
      <Tab $first $w={122} $p={7}><WinMark w={10} />Layout #1<CloseDot /></Tab>
      <Tab $on $w={128} $p={3}><WinMark w={10} />Layout #2<CloseDot /></Tab>
      <Tab $last $w={30}>+</Tab>
    </TabStrip>
    <ViewTop>
      <ViewTools>
        <SmallCell><Sm><path d="M-8 -16H16V5H-8Z" fill="#c9c9b8" /><circle cx="5" cy="-6" r="6" fill="#fff" /><path d="M-17 4V19H0L-5 13C2 6 8 10 7 18C15 8 4 -3 -9 7Z" fill="#f4643c" stroke="#c2573b" strokeWidth="2" /></Sm></SmallCell>
        <SmallCell $dim><Sm><path d="M-16 -16H6V5H-16Z" fill="#c9c9b8" /><circle cx="-4" cy="-6" r="6" fill="#fff" /><path d="M17 4V19H0L5 13C-2 6 -8 10 -7 18C-15 8 -4 -3 9 7Z" fill="#a6d88a" strokeWidth="2" /></Sm></SmallCell>
        <Divider />
        <SmallCell>2D</SmallCell>
        <SmallCell><Sm><path d="M-16 -15H14V11H-16Z" fill="#b9b9a6" /><circle cx="-2" cy="-3" r="8" fill="#e9e9e0" /><circle cx="9" cy="8" r="10" fill="#67c43b" stroke="none" /><circle cx="8" cy="7" r="4" stroke="#fff" /></Sm></SmallCell>
        <Divider />
        <SmallCell><Sm><Dash /><path d="M-4 -14V2M-12 -6H4" stroke="#1d8a1d" strokeWidth="4" /><Arrow /></Sm></SmallCell>
        <SmallCell><Sm><Dash /><path d="M-14 -6H4" stroke="#e01b24" strokeWidth="4" /><Arrow /></Sm></SmallCell>
        <SmallCell><Sm><Dash /><path d="M0 -16V0M-8 -8H8" stroke="#1d8a1d" strokeWidth="4" /><path d="M-10 5H10" stroke="#e01b24" strokeWidth="4" /><Arrow /></Sm></SmallCell>
        <Divider />
        <SmallCell><Sm><Dash /><path d="M0 -12L12 10H-12Z" fill="#86c765" stroke="none" /><Arrow /></Sm></SmallCell>
        <SmallCell><Sm><Dash /><RedDots /><Arrow /></Sm></SmallCell>
        <SmallCell><Sm><Surf full /></Sm></SmallCell>
        <SmallCell><Sm><Surf full red /></Sm></SmallCell>
        <SmallCell><Sm><Surf /></Sm></SmallCell>
        <SmallCell><Sm><Surf red /></Sm></SmallCell>
        <SmallCell $dim><Sm><Dash /><path d="M-10 -8L8 8M8 -8L-10 8" /><circle cx="4" cy="2" r="6" fill="#86c765" /><Arrow /></Sm></SmallCell>
        <SmallCell><Sm><path d="M0 -12L11 8H-13Z" fill="#86c765" stroke="none" /><Arrow /></Sm></SmallCell>
        <SmallCell><Sm><path d="M-12 12L0 -10L13 10" strokeWidth="1.500" /><RedDots /><Arrow /></Sm></SmallCell>
        <SmallCell><Sm><path d="M-14 0h5v5h-5z" fill="#f0422a" stroke="none" /><path d="M-3 -8C-2 -17 12 -16 11 -7C10 0 4 -1 4 7M4 11V15" strokeWidth="4" /></Sm></SmallCell>
        <SmallCell><Sm><path d="M-8 -4L2 14H-17Z" fill="#86c765" strokeWidth="2" /><path d="M0 -8C1 -17 15 -16 14 -7C13 0 7 -1 7 7M7 11V15" strokeWidth="4" /></Sm></SmallCell>
        <SmallCell $dim><Sm><path d="M-13 -13V13Q0 19 13 13V-13Z" fill="#8c8c8c" stroke="#858585" /><ellipse cy="-13" rx="13" ry="5" fill="#bbb" stroke="#888" /></Sm></SmallCell>
      </ViewTools>
      <ViewName>RenderView2</ViewName>
      <ViewButtons>
        <ViewButton><WinMark w={9} kind="v" /></ViewButton>
        <ViewButton><WinMark w={9} kind="h" /></ViewButton>
        <ViewButton><WinMark w={9} /></ViewButton>
        <ViewButton><FloatDot s={11} c="#555" /></ViewButton>
        <ViewButton><CloseDot s={11} c="#555" /></ViewButton>
      </ViewButtons>
    </ViewTop>
    <Frame><Scene /></Frame>
  </Views>
);

export default function App() {
  return (
    <Desktop>
      <GlobalStyle />
      <Defs />
      <Window>
        <TitleBar>
          <Lights><Light $c="#ff5b52" $b="#e2463f" /><Light $c="#ffb92e" $b="#df9d22" /><Light $c="#28c83c" $b="#1dac2c" /></Lights>
          ParaView 5.6.0 64-bit
          <i />
        </TitleBar>
        <MainToolbar />
        <ColorToolbar />
        <FilterToolbar />
        <Body>
          <Dock><PipelineDock /><PropertiesDock /></Dock>
          <ViewArea />
        </Body>
        <Status><Abort><Cross s={10} /></Abort><Progress /></Status>
      </Window>
    </Desktop>
  );
}
